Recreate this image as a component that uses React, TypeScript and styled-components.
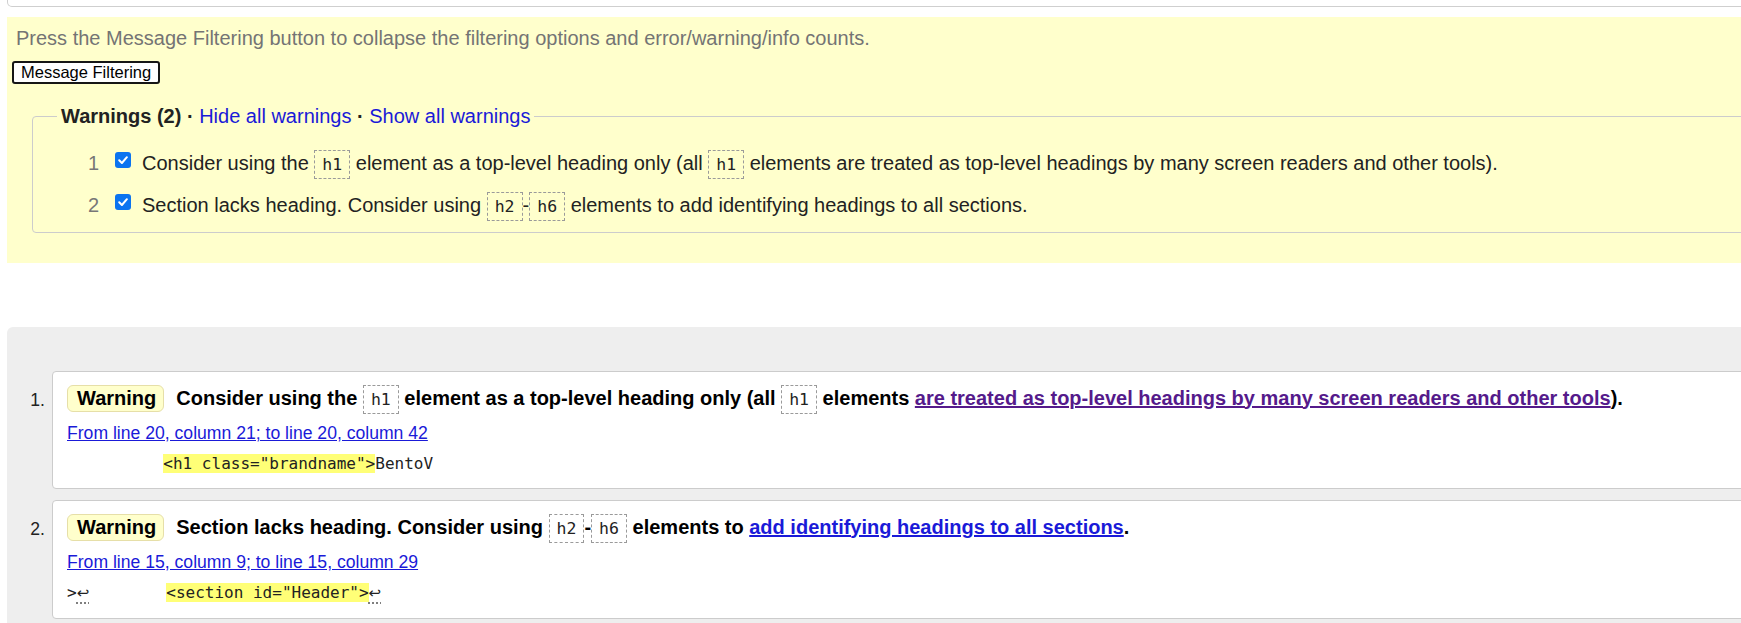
import React from "react";
import styled, { createGlobalStyle } from "styled-components";

const Global = createGlobalStyle`
  html, body {
    margin: 0;
    padding: 0;
    overflow: hidden;
    background: #ffffff;
    font-family: "Liberation Sans", Arial, sans-serif;
  }
`;

const Page = styled.div`
  width: 1800px;
  padding-left: 7px;
  box-sizing: border-box;
`;

const TopBox = styled.div`
  height: 6px;
  border: 1px solid #cfcfcf;
  border-top: none;
  border-radius: 0 0 5px 5px;
  background: #fff;
`;

const FilterPanel = styled.section`
  margin-top: 10px;
  background: #ffffcc;
  padding: 10px 0 30px 5px;
`;

const Intro = styled.p`
  margin: 0;
  padding-left: 4px;
  font-size: 20px;
  line-height: 23px;
  color: #747474;
  white-space: nowrap;
`;

const FilterButton = styled.button`
  display: block;
  margin-top: 11px;
  height: 23px;
  box-sizing: border-box;
  padding: 0 7px;
  border: 2px solid #161616;
  border-radius: 3px;
  background: #ffffff;
  color: #000;
  font-family: "Liberation Sans", Arial, sans-serif;
  font-size: 16.5px;
  line-height: 19px;
`;

const Fieldset = styled.fieldset`
  margin: 22px 0 0 20px;
  padding: 0 0 6px 0;
  border: 1px solid #cccccc;
  border-radius: 4px;
  min-width: 0;
`;

const Legend = styled.legend`
  margin-left: 24px;
  padding: 0 4px;
  font-size: 20px;
  line-height: 20px;
  color: #222;
  white-space: nowrap;
`;

const LegendTitle = styled.strong`
  font-weight: bold;
`;

const Dot = styled.span`
  font-weight: bold;
`;

const LegendLink = styled.a`
  color: #1a1ad8;
  text-decoration: none;
`;

const FilterList = styled.ol`
  list-style: none;
  margin: 0;
  padding: 16px 0 0 46px;
`;

const FilterRow = styled.li`
  display: flex;
  align-items: center;
  height: 42px;
  font-size: 20px;
  color: #222;
  white-space: nowrap;
`;

const RowNum = styled.span`
  width: 20px;
  text-align: right;
  color: #777;
`;

const CheckBox = styled.span`
  display: inline-flex;
  align-items: center;
  justify-content: center;
  width: 16px;
  height: 16px;
  margin: 0 0 6px 16px;
  border-radius: 3px;
  background: #0b74f0;
  flex: none;
`;

const RowText = styled.span`
  margin-left: 11px;
`;

const Code = styled.code`
  font-family: "DejaVu Sans Mono", "Liberation Mono", monospace;
  font-size: 16.5px;
  font-weight: normal;
  border: 1px dashed #9a9a9a;
  padding: 4px 7px;
  color: #222;
`;

const Results = styled.section`
  margin-top: 64px;
  background: #eeeeee;
  border-radius: 6px 0 0 0;
  padding: 44px 0 40px 0;
`;

const ResultList = styled.ol`
  list-style: none;
  margin: 0;
  padding: 0;
`;

const ResultItem = styled.li`
  display: flex;
  margin-bottom: 11px;
`;

const Marker = styled.span`
  width: 38px;
  flex: none;
  text-align: right;
  padding-top: 19px;
  line-height: 20px;
  font-size: 17.6px;
  color: #222;
`;

const Card = styled.div`
  flex: 1;
  margin-left: 7px;
  background: #ffffff;
  border: 1px solid #cccccc;
  border-radius: 4px;
  padding: 13px 0 14px 14px;
`;

const CardHead = styled.div`
  display: flex;
  align-items: center;
  gap: 12px;
  height: 27px;
  white-space: nowrap;
`;

const Badge = styled.span`
  box-sizing: border-box;
  height: 27px;
  padding: 0 7px 0 9px;
  border: 1px solid #e6dfa8;
  border-radius: 6px;
  background: #ffffcc;
  font-size: 20px;
  font-weight: bold;
  line-height: 25px;
  color: #000;
`;

const HeadText = styled.span`
  font-size: 20px;
  font-weight: bold;
  line-height: 27px;
  color: #000;
`;

const HeadLink = styled.a<{ $visited?: boolean }>`
  color: ${(p) => (p.$visited ? "#551a8b" : "#1a1ad8")};
  text-decoration: underline;
`;

const LocLink = styled.a`
  display: inline-block;
  margin-top: 11px;
  font-size: 17.6px;
  line-height: 20px;
  color: #1a1ad8;
  text-decoration: underline;
`;

const CodeLine = styled.div`
  margin-top: 10px;
  font-family: "DejaVu Sans Mono", "Liberation Mono", monospace;
  font-size: 16px;
  line-height: 21px;
  white-space: pre;
  color: #222;
`;

const Mark = styled.mark`
  background: #ffff77;
  color: #222;
`;

const Ret = styled.span`
  font-family: "DejaVu Sans", sans-serif;
  font-size: 15px;
  text-decoration-line: underline;
  text-decoration-style: dotted;
  text-underline-offset: 5px;
  text-decoration-color: #555;
`;

const Check = () => (
  <CheckBox>
    <svg width="12" height="12" viewBox="0 0 12 12">
      <path d="M2.2 6.3 L4.9 9 L9.9 3.2" fill="none" stroke="#fff" strokeWidth="2" strokeLinecap="round" strokeLinejoin="round" />
    </svg>
  </CheckBox>
);

export default function App() {
  return (
    <>
      <Global />
      <Page>
        <TopBox />
        <FilterPanel>
          <Intro>Press the Message Filtering button to collapse the filtering options and error/warning/info counts.</Intro>
          <FilterButton>Message Filtering</FilterButton>
          <Fieldset>
            <Legend>
              <LegendTitle>Warnings (2)</LegendTitle> <Dot>·</Dot> <LegendLink href="#">Hide all warnings</LegendLink> <Dot>·</Dot>{" "}
              <LegendLink href="#">Show all warnings</LegendLink>
            </Legend>
            <FilterList>
              <FilterRow>
                <RowNum>1</RowNum>
                <Check />
                <RowText>
                  Consider using the <Code>h1</Code> element as a top-level heading only (all <Code>h1</Code> elements are treated as top-level headings by many screen readers and other tools).
                </RowText>
              </FilterRow>
              <FilterRow>
                <RowNum>2</RowNum>
                <Check />
                <RowText>
                  Section lacks heading. Consider using <Code>h2</Code>-<Code>h6</Code> elements to add identifying headings to all sections.
                </RowText>
              </FilterRow>
            </FilterList>
          </Fieldset>
        </FilterPanel>
        <Results>
          <ResultList>
            <ResultItem>
              <Marker>1.</Marker>
              <Card>
                <CardHead>
                  <Badge>Warning</Badge>
                  <HeadText>
                    Consider using the <Code>h1</Code> element as a top-level heading only (all <Code>h1</Code> elements{" "}
                    <HeadLink $visited href="#">are treated as top-level headings by many screen readers and other tools</HeadLink>).
                  </HeadText>
                </CardHead>
                <LocLink href="#">From line 20, column 21; to line 20, column 42</LocLink>
                <CodeLine>
                  {"          "}
                  <Mark>{'<h1 class="brandname">'}</Mark>BentoV
                </CodeLine>
              </Card>
            </ResultItem>
            <ResultItem>
              <Marker>2.</Marker>
              <Card>
                <CardHead>
                  <Badge>Warning</Badge>
                  <HeadText>
                    Section lacks heading. Consider using <Code>h2</Code>-<Code>h6</Code> elements to{" "}
                    <HeadLink href="#">add identifying headings to all sections</HeadLink>.
                  </HeadText>
                </CardHead>
                <LocLink href="#">From line 15, column 9; to line 15, column 29</LocLink>
                <CodeLine>
                  {">"}
                  <Ret>↩</Ret>
                  {"        "}
                  <Mark>{'<section id="Header">'}</Mark>
                  <Ret>↩</Ret>
                </CodeLine>
              </Card>
            </ResultItem>
          </ResultList>
        </Results>
      </Page>
    </>
  );
}
